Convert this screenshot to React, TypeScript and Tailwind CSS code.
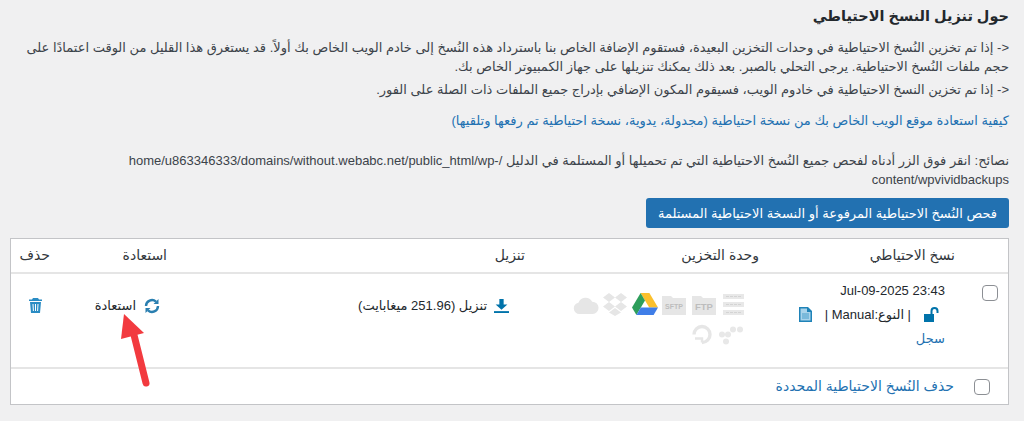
import React from 'react';

const font = "font-['Liberation_Sans','DejaVu_Sans',sans-serif]";

const Folder = ({ label, className }: { label: string; className?: string }) => (
  <svg width="24" height="20" viewBox="0 0 24 20" className={className}>
    <path d="M0 1h9l2 2h13v17H0z" fill="#e6e6e6" />
    <text x="12" y={label.length > 3 ? 14 : 15} textAnchor="middle" fontSize={label.length > 3 ? 7 : 9.5} fontWeight="700" fill="#bdbdbd" fontFamily="Liberation Sans">{label}</text>
  </svg>
);

const StorageIcons = () => (
  <div className="flex flex-wrap gap-y-[8px] w-[180px] items-center">
    <svg width="21" height="21" viewBox="0 0 21 21" fill="#e8e8e8">
      <rect x="0" y="0" width="21" height="5" />
      <rect x="0" y="8" width="21" height="5" />
      <rect x="0" y="16" width="21" height="5" />
      <path d="M3 2.500h15M3 10.500h15M3 18.500h15" stroke="#d4d4d4" strokeWidth="1" strokeDasharray="3 1" />
    </svg>
    <Folder label="FTP" className="mr-[7px]" />
    <Folder label="SFTP" className="mr-[6px]" />
    <svg width="26" height="23" viewBox="0 0 26 23" className="mr-[4px]">
      <path d="M8.600 0h8.800L26 14.500h-8.800z" fill="#fbc02d" />
      <path d="M8.600 0 0 14.500 4.400 22 13 7.500z" fill="#2e9e5b" />
      <path d="M4.400 22h17.200L26 14.500H8.800z" fill="#3f7ee8" />
    </svg>
    <svg width="24" height="23" viewBox="0 0 24 23" fill="#e6e6e6" className="mr-[5px]">
      <path d="M6 0 0 4.500 6 9l6-4.500zM18 0l-6 4.500L18 9l6-4.500zM0 13.500 6 18l6-4.500L6 9zM24 13.500 18 18l-6-4.500L18 9zM6 19.500l6 3.500 6-3.500-6-4.500z" />
    </svg>
    <svg width="26" height="18" viewBox="0 0 26 19" fill="#e6e6e6" className="mr-[4px]">
      <path d="M6 19a6 6 0 0 1-1-11.900A8 8 0 0 1 19.500 6 6.500 6.500 0 0 1 20 19z" />
    </svg>
    <svg width="26" height="21" viewBox="0 0 26 20" fill="#e8e8e8">
      <circle cx="22" cy="5" r="3" />
      <circle cx="15" cy="5" r="3" />
      <circle cx="10" cy="10" r="3" />
      <circle cx="4" cy="10" r="3" />
      <circle cx="8" cy="17" r="3" />
    </svg>
    <svg width="20" height="21" viewBox="0 0 20 20" fill="none" stroke="#e6e6e6" strokeWidth="3.400" className="mr-[6px]">
      <path d="M10 18a8 8 0 1 0-8-8" />
      <path d="M6 14h4v4M3 14h3" strokeWidth="2.400" />
    </svg>
  </div>
);

const Checkbox = () => (
  <span className="block w-4 h-4 rounded-[4px] border border-[#8c8f94] bg-white" />
);

export default function App() {
  return (
    <div dir="rtl" className={`relative w-[1024px] h-[421px] overflow-hidden bg-[#f0f0f1] px-[15px] text-[13px] leading-[19px] text-[#3c434a] ${font}`}>
      <h2 className="pt-[7px] text-[14.5px] leading-[19px] font-bold text-[#23282d]">حول تنزيل النسخ الاحتياطي</h2>

      <p className="mt-[12px]">&lt;- إذا تم تخزين النُسخ الاحتياطية في وحدات التخزين البعيدة، فستقوم الإضافة الخاص بنا باسترداد هذه النُسخ إلى خادم الويب الخاص بك أولاً. قد يستغرق هذا القليل من الوقت اعتمادًا على حجم ملفات النُسخ الاحتياطية. يرجى التحلي بالصبر. بعد ذلك يمكنك تنزيلها على جهاز الكمبيوتر الخاص بك.</p>
      <p className="mt-[4px]">&lt;- إذا تم تخزين النسخ الاحتياطية في خادوم الويب، فسيقوم المكون الإضافي بإدراج جميع الملفات ذات الصلة على الفور.</p>
      <p className="mt-[12px]">
        <a className="text-[#2271b1]">كيفية استعادة موقع الويب الخاص بك من نسخة احتياطية (مجدولة، يدوية، نسخة احتياطية تم رفعها وتلقيها)</a>
      </p>
      <p className="mt-[21px]">نصائح: انقر فوق الزر أدناه لفحص جميع النُسخ الاحتياطية التي تم تحميلها أو المستلمة في الدليل /home/u863346333/domains/without.webabc.net/public_html/wp-content/wpvividbackups</p>

      <button className="block mt-[9px] h-[30px] w-[363px] rounded-[3px] bg-[#2271b1] text-white text-[13px]">فحص النُسخ الاحتياطية المرفوعة أو النسخة الاحتياطية المستلمة</button>

      <div className="mt-[10px] w-[999px] ml-[-5px] border border-[#c3c4c7] bg-white">
        <div className="grid grid-cols-[44px_196px_234px_358px_117px_1fr] h-[35px] items-center border-b-2 border-[#e5e5e5] text-[14px] text-[#32373c]">
          <span />
          <span className="pr-[9px]">نسخ الاحتياطي</span>
          <span className="pr-[9px]">وحدة التخزين</span>
          <span className="pr-[9px]">تنزيل</span>
          <span className="pr-[9px]">استعادة</span>
          <span className="pr-[9px]">حذف</span>
        </div>

        <div className="grid grid-cols-[44px_196px_234px_358px_117px_1fr] h-[95px] border-b-2 border-[#e5e5e5] text-[#23282d]">
          <div className="pt-[11px] pr-[10px]"><Checkbox /></div>
          <div className="pt-[7px] pr-[19px]">
            <div dir="ltr" className="text-right">Jul-09-2025 23:43</div>
            <div className="mt-[5px] flex items-center gap-[13px]">
              <svg width="15" height="15" viewBox="0 0 15 15" fill="#0073aa" className="mr-[6px]">
                <path d="M0 7h10v8H0z" />
                <path d="M7.500 7V4a3 3 0 0 1 6 0v2" fill="none" stroke="#0073aa" strokeWidth="2" />
              </svg>
              <span>| النوع:Manual |</span>
              <svg width="13" height="15" viewBox="0 0 13 15">
                <path d="M0 0h9l4 4v11H0z" fill="#1f83b8" />
                <path d="M1.500 1.500h6.500v3.500h3.500v8.500H1.500z" fill="#a9d3ea" />
                <path d="M3 7h7M3 9h7M3 11h7" stroke="#4a9fcb" />
              </svg>
            </div>
            <a className="block mt-[5px] text-[#2271b1]">سجل</a>
          </div>
          <div className="pt-[19px] pr-[24px]"><StorageIcons /></div>
          <div className="pt-[22px] pr-[25px] flex items-start gap-[7px]">
            <svg width="15" height="15" viewBox="1 0 14 16" preserveAspectRatio="none" fill="#0073aa" className="mt-[2px]">
              <path d="M6 1h4v6h3.500L8 12.500 2.500 7H6z" />
              <rect x="1" y="14" width="14" height="2" />
            </svg>
            <span>تنزيل (251.96 ميغابايت)</span>
          </div>
          <div className="pt-[22px] pr-[16px] flex items-start gap-[8px]">
            <svg width="16" height="16" viewBox="0 0 16 16" fill="none" stroke="#2a7fb0" strokeWidth="2.400" className="mt-[2px]">
              <path d="M2 8a6 6 0 0 1 10-4.400" />
              <path d="M14 8a6 6 0 0 1-10 4.400" />
              <path d="M14.500 1v5h-5zM1.500 15v-5h5z" fill="#2a7fb0" stroke="none" />
            </svg>
            <span>استعادة</span>
          </div>
          <div className="pt-[24px] pr-[17px]">
            <svg width="13" height="15" viewBox="0 0 13 15" fill="#2a8cc4">
              <path d="M4 0h5l1 1.500h3V3H0V1.500h3z" />
              <path d="M1 4h11l-1 11H2zM3.500 6l.4 7h1L4.500 6zM6 6v7h1V6zM8.500 6l-.4 7h1l.4-7z" fillRule="evenodd" />
            </svg>
          </div>
        </div>

        <div className="flex items-center h-[35px] pr-[18px] gap-[20px]">
          <Checkbox />
          <a className="text-[14px] text-[#2271b1]">حذف النُسخ الاحتياطية المحددة</a>
        </div>
      </div>

      <svg width="40" height="80" viewBox="0 0 40 80" className="absolute left-[115px] top-[310px]" fill="#f23a3f">
        <path d="M31 73 19 25" stroke="#f23a3f" strokeWidth="7" strokeLinecap="round" />
        <path d="M9 4 6 29l23-6z" />
      </svg>
    </div>
  );
}
